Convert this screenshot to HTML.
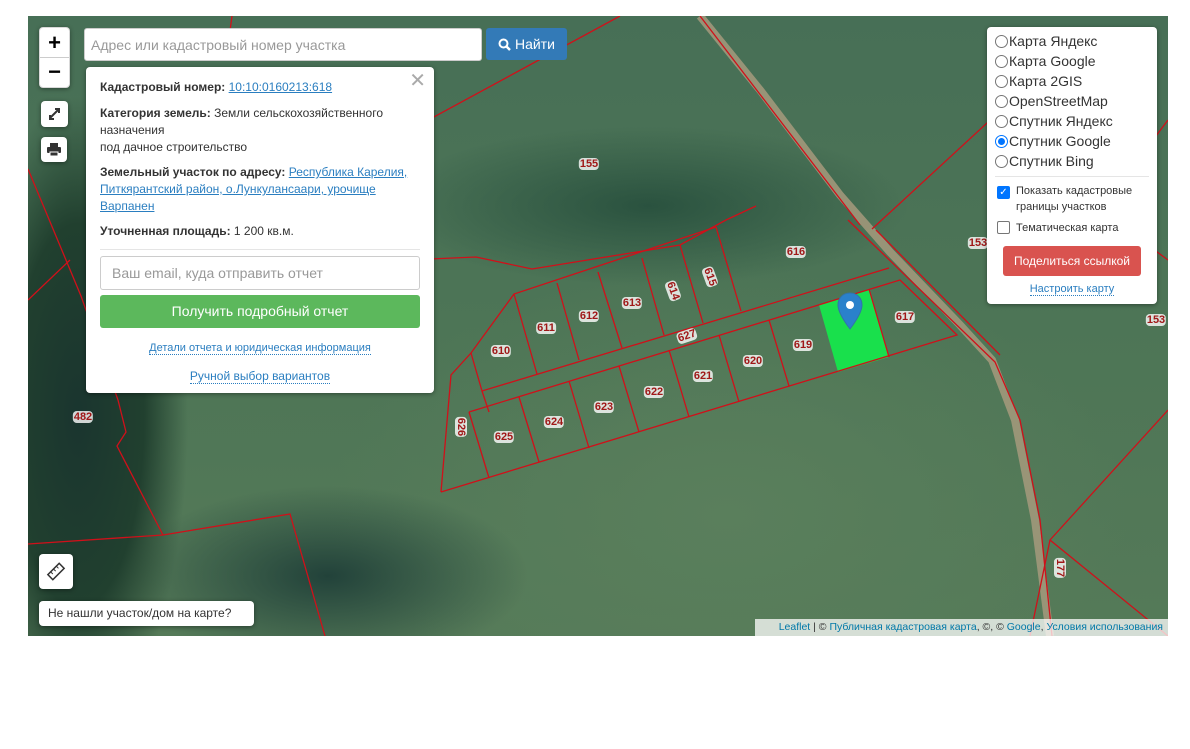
<!DOCTYPE html>
<html><head><meta charset="utf-8"><style>
*{box-sizing:border-box}
body{margin:0;width:1190px;height:749px;background:#fff;font-family:"Liberation Sans",Arial,sans-serif;position:relative;overflow:hidden}
#map{position:absolute;left:28px;top:16px;width:1140px;height:620px;overflow:hidden;
background:
radial-gradient(ellipse 110px 320px at 50px 400px,#1a352f 0%,#21402f 60%,rgba(33,64,47,0) 100%),
radial-gradient(ellipse 200px 90px at 300px 560px,#22423a 0%,rgba(34,66,58,0) 100%),
radial-gradient(ellipse 260px 80px at 620px 190px,#2a523f 0%,rgba(42,82,63,0) 100%),
radial-gradient(ellipse 400px 250px at 700px 500px,#5a7f5c 0%,rgba(90,127,92,0) 100%),
linear-gradient(180deg,#476f56,#4d7556 50%,#557a58);}
.box{position:absolute;background:#fff;border-radius:4px;box-shadow:0 1px 5px rgba(0,0,0,.4)}
.lbl{position:absolute;font-size:11px;font-weight:bold;color:#a01818;background:rgba(255,255,255,.8);border-radius:4px;padding:0 1px;line-height:12px;transform:translate(-50%,-50%)}
#pop{font-size:12px;color:#333;line-height:17px}
#pop b{font-weight:bold}
#pop a{color:#2a7ec0;text-decoration:underline}
.lay{font-size:14px;color:#333;line-height:20px}
.r{display:inline-block;width:13px;height:13px;border:1px solid #767676;border-radius:50%;vertical-align:-2px;margin-right:1px;position:relative}
</style></head><body>
<div id="map">
<svg width="1140" height="620" style="position:absolute;left:0;top:0" viewBox="28 16 1140 620">
<path d="M700 16 L760 90 L840 195 L890 252 L960 325 L992 360 L1015 420 L1035 520 L1050 636" stroke="#a69a7c" stroke-width="8" fill="none" opacity=".85"/>
<g stroke="#d0101a" stroke-width="1.3" fill="none">
<polygon points="819,305 869,289 889,357 838,372" fill="#19e04c" stroke="none"/>
<path d="M441,492 L451,375 L471,353 L514,294 L716,227"/>
<path d="M471,353 L482,391 L889,268"/>
<path d="M482,391 L489,412"/>
<path d="M469,412 L900,280 L957,335 L441,492"/>
<path d="M469,412 L489,478 M519,397 L539,462 M569,381 L589,448 M619,366 L639,432 M669,350 L689,417 M719,335 L739,402 M769,320 L789,386 M869,289 L889,357"/>
<path d="M514,294 L537,374 M557,283 L579,360 M598,272 L622,348 M642,258 L664,335 M680,245 L703,323 M716,227 L741,311"/>
<path d="M430,259 L476,257 L532,269 L680,245 L726,220 L756,206"/>
<path d="M408,131 L620,16"/>
<path d="M872,229 L987,123 L1030,80"/>
<path d="M848,220 L995,362 L1020,420 L1040,520 L1052,636"/>
<path d="M876,230 L1000,355"/>
<path d="M700,16 L860,225"/>
<path d="M1168,410 L1050,540 L1168,636 M1050,540 L1030,636"/>
<path d="M28,544 L163,535 L290,514 L325,636"/>
<path d="M118,400 L126,432 L117,446 L163,535"/>
<path d="M28,169 L81,296 L118,400"/>
<path d="M28,300 L70,260 M232,16 L226,60"/>
<path d="M1100,210 L1168,260 M1100,210 L1168,120"/>
</g>
<path d="M850 293c-7 0-12 5-12 12 0 9 12 24 12 24s12-15 12-24c0-7-5-12-12-12z" fill="#2a81cb" stroke="#3174a8"/>
<circle cx="850" cy="305" r="4" fill="#fff"/>
</svg>
<div style="position:absolute;left:-28px;top:-16px">
<span class="lbl" style="left:501px;top:351px">610</span>
<span class="lbl" style="left:546px;top:328px">611</span>
<span class="lbl" style="left:589px;top:316px">612</span>
<span class="lbl" style="left:632px;top:303px">613</span>
<span class="lbl" style="left:673px;top:291px;transform:translate(-50%,-50%) rotate(70deg)">614</span>
<span class="lbl" style="left:710px;top:277px;transform:translate(-50%,-50%) rotate(70deg)">615</span>
<span class="lbl" style="left:796px;top:252px">616</span>
<span class="lbl" style="left:905px;top:317px">617</span>
<span class="lbl" style="left:687px;top:336px;transform:translate(-50%,-50%) rotate(-18deg)">627</span>
<span class="lbl" style="left:803px;top:345px">619</span>
<span class="lbl" style="left:753px;top:361px">620</span>
<span class="lbl" style="left:703px;top:376px">621</span>
<span class="lbl" style="left:654px;top:392px">622</span>
<span class="lbl" style="left:604px;top:407px">623</span>
<span class="lbl" style="left:554px;top:422px">624</span>
<span class="lbl" style="left:504px;top:437px">625</span>
<span class="lbl" style="left:461px;top:427px;transform:translate(-50%,-50%) rotate(90deg)">626</span>
<span class="lbl" style="left:589px;top:164px">155</span>
<span class="lbl" style="left:978px;top:243px">153</span>
<span class="lbl" style="left:1156px;top:320px">153</span>
<span class="lbl" style="left:83px;top:417px">482</span>
<span class="lbl" style="left:1060px;top:568px;transform:translate(-50%,-50%) rotate(90deg)">177</span>
</div>
</div>

<div class="box" style="left:39px;top:27px;width:31px;height:61px;border:1px solid rgba(0,0,0,.15)">
<div style="height:30px;border-bottom:1px solid #ccc;text-align:center;font:bold 22px/29px 'Liberation Sans';color:#000">+</div>
<div style="text-align:center;font:bold 22px/28px 'Liberation Sans';color:#000">−</div>
</div>
<div class="box" style="left:41px;top:101px;width:27px;height:26px">
<svg width="27" height="26"><path d="M9 17l9-9M14 8h4v4M13 18H9v-4" stroke="#333" stroke-width="2" fill="none"/></svg></div>
<div class="box" style="left:41px;top:137px;width:26px;height:25px">
<svg width="26" height="25"><rect x="9" y="6" width="8" height="4" fill="#333"/><rect x="6" y="10" width="14" height="6" rx="1" fill="#333"/><rect x="9" y="15" width="8" height="4" fill="#333" stroke="#fff" stroke-width="1"/></svg></div>

<div style="position:absolute;left:84px;top:28px;width:398px;height:33px;background:#fff;border:1px solid #ccc;border-radius:3px;font-size:14px;color:#999;padding:8px 6px">Адрес или кадастровый номер участка</div>
<div style="position:absolute;left:486px;top:28px;width:81px;height:32px;background:#337ab7;border-radius:3px;color:#fff;font-size:14px;line-height:32px;text-align:center">
<svg width="13" height="13" style="vertical-align:-2px"><circle cx="5.5" cy="5.5" r="4" stroke="#fff" stroke-width="2" fill="none"/><path d="M8.5 8.5l3.5 3.5" stroke="#fff" stroke-width="2.5"/></svg> Найти</div>

<div id="pop" class="box" style="left:86px;top:67px;width:348px;height:326px;padding:12px 14px">
<div style="position:absolute;right:8px;top:4px;font-size:20px;color:#aaa;line-height:20px">✕</div>
<div><b>Кадастровый номер:</b> <a>10:10:0160213:618</a></div>
<div style="margin-top:9px"><b>Категория земель:</b> Земли сельскохозяйственного назначения<br>под дачное строительство</div>
<div style="margin-top:8px"><b>Земельный участок по адресу:</b> <a>Республика Карелия, Питкярантский район, о.Лункулансаари, урочище Варпанен</a></div>
<div style="margin-top:8px"><b>Уточненная площадь:</b> 1 200 кв.м.</div>
<div style="border-top:1px solid #e5e5e5;margin-top:9px"></div>
<div style="margin-top:6px;height:34px;border:1px solid #ccc;border-radius:3px;font-size:14px;color:#999;padding:8px 11px">Ваш email, куда отправить отчет</div>
<div style="margin-top:5px;height:33px;background:#5cb85c;border-radius:3px;color:#fff;font-size:14px;line-height:33px;text-align:center">Получить подробный отчет</div>
<div style="text-align:center;margin-top:12px;font-size:11px"><span style="color:#2a7ec0;border-bottom:1px dotted #2a7ec0">Детали отчета и юридическая информация</span></div>
<div style="text-align:center;margin-top:11px"><span style="color:#2a7ec0;border-bottom:1px dotted #2a7ec0">Ручной выбор вариантов</span></div>
</div>

<div class="box lay" style="left:987px;top:27px;width:170px;height:277px;padding:4px 8px">
<div><span class="r"></span>Карта Яндекс</div>
<div><span class="r"></span>Карта Google</div>
<div><span class="r"></span>Карта 2GIS</div>
<div><span class="r"></span>OpenStreetMap</div>
<div><span class="r"></span>Спутник Яндекс</div>
<div><span class="r" style="border-color:#0075ff"><span style="position:absolute;left:2px;top:2px;width:7px;height:7px;border-radius:50%;background:#0075ff"></span></span>Спутник Google</div>
<div><span class="r"></span>Спутник Bing</div>
<div style="border-top:1px solid #e5e5e5;margin:5px 0 6px"></div>
<div style="font-size:11px;line-height:16px;position:relative;padding-left:21px"><span style="position:absolute;left:2px;top:3px;width:13px;height:13px;background:#0075ff;border-radius:2px;color:#fff;font-size:10px;line-height:13px;text-align:center">✓</span>Показать кадастровые границы участков</div>
<div style="font-size:11px;line-height:16px;position:relative;padding-left:21px;margin-top:5px"><span style="position:absolute;left:2px;top:1px;width:13px;height:13px;border:1px solid #767676;border-radius:2px"></span>Тематическая карта</div>
<div style="margin:10px 8px 0;height:30px;background:#d9534f;border-radius:3px;color:#fff;font-size:12px;line-height:30px;text-align:center">Поделиться ссылкой</div>
<div style="text-align:center;font-size:11px;margin-top:6px;line-height:14px"><span style="color:#2a7ec0;border-bottom:1px dotted #2a7ec0">Настроить карту</span></div>
</div>

<div class="box" style="left:39px;top:554px;width:34px;height:35px">
<svg width="34" height="35"><g transform="rotate(-45 17 17.5)"><rect x="9" y="14" width="16" height="7" fill="none" stroke="#333" stroke-width="1.5"/><path d="M13 14v3M17 14v3M21 14v3" stroke="#333"/></g></svg></div>
<div class="box" style="left:39px;top:601px;width:215px;height:25px;font-size:12px;color:#333;line-height:25px;padding-left:9px">Не нашли участок/дом на карте?</div>
<div style="position:absolute;left:755px;top:619px;width:413px;height:17px;background:rgba(255,255,255,.75);font-size:10.5px;line-height:17px;color:#333;padding-right:5px;text-align:right;white-space:nowrap"><span style="color:#0078a8">Leaflet</span> | © <span style="color:#0078a8">Публичная кадастровая карта</span>, ©, © <span style="color:#0078a8">Google</span>, <span style="color:#0078a8">Условия использования</span></div>
</body></html>
